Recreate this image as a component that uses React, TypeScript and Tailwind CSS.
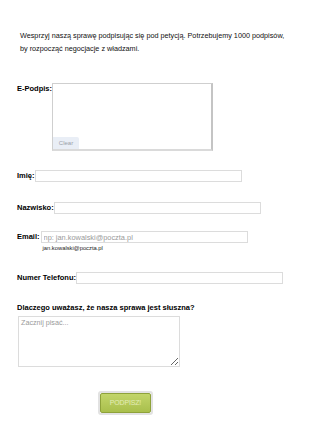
import React from "react";

const inputCls =
  "block h-[12px] w-[207px] border border-[#dcdcdc] bg-white px-[2px] text-[7.4px] text-[#333] outline-none placeholder:text-[#9a9a9a]";

const App: React.FC = () => {
  return (
    <div className="min-h-[433px] w-[310px] bg-white text-black" style={{ fontFamily: '"Liberation Sans", Arial, sans-serif' }}>
      <p className="pl-[20px] pt-[29px] text-[7.25px] leading-[13px] text-[#111]">
        Wesprzyj naszą sprawę podpisując się pod petycją. Potrzebujemy 1000 podpisów,
        <br />
        by rozpocząć negocjacje z władzami.
      </p>

      <form className="pl-[17px] leading-[10px]" onSubmit={(e) => e.preventDefault()}>
        {/* signature pad */}
        <div className="mt-[28px] flex items-start">
          <label className="mt-[1px] text-[7.5px] font-bold leading-[9px]">E-Podpis:</label>
          <div className="relative h-[68px] w-[161px] border border-[#cfcfcf] border-b-2 border-r-2 border-b-[#dadada] border-r-[#c4c4c4] bg-white">
            <button
              type="button"
              className="absolute bottom-0 left-0 h-[12px] w-[26px] rounded-tr-[2px] bg-[#e9eef6] text-[6px] text-[#9aa0a8]"
            >
              Clear
            </button>
          </div>
        </div>

        <div className="mt-[19px] flex items-center">
          <label className="text-[7.5px] font-bold">Imię:</label>
          <input type="text" className={inputCls} />
        </div>

        <div className="mt-[20px] flex items-center">
          <label className="text-[7.5px] font-bold">Nazwisko:</label>
          <input type="text" className={inputCls} />
        </div>

        <div className="mt-[17px] flex items-start">
          <label className="mt-[1px] text-[7.5px] font-bold">Email:</label>
          <div className="ml-[1px]">
            <input type="email" placeholder="np: jan.kowalski@poczta.pl" className={inputCls} />
            <div className="mt-[1px] pl-[2px] text-[5.8px] leading-[8px] text-[#222]">jan.kowalski@poczta.pl</div>
          </div>
        </div>

        <div className="mt-[20px] flex items-center">
          <label className="text-[7.5px] font-bold">Numer Telefonu:</label>
          <input type="tel" className={inputCls} />
        </div>

        <div className="mt-[18px] text-[7.5px] font-bold leading-[12px]">Dlaczego uważasz, że nasza sprawa jest słuszna?</div>
        <textarea
          placeholder="Zacznij pisać..."
          className="ml-[1px] mt-[2px] block h-[51px] w-[162px] border border-[#dcdcdc] px-[2px] py-[1px] text-[7.2px] leading-[9px] outline-none placeholder:text-[#9a9a9a]"
        />

        <div className="mt-[24px] flex pl-[81px]">
          <div className="rounded-[3px] border-2 border-[#e2e2e2]">
            <button
              type="submit"
              className="block h-[20px] w-[51px] rounded-[2px] border border-[#8ea23a] bg-gradient-to-b from-[#c2d569] to-[#a9bf4c] text-[7px] tracking-tight text-[#e3ecb8]"
            >
              PODPISZ!
            </button>
          </div>
        </div>
      </form>
    </div>
  );
};

export default App;
